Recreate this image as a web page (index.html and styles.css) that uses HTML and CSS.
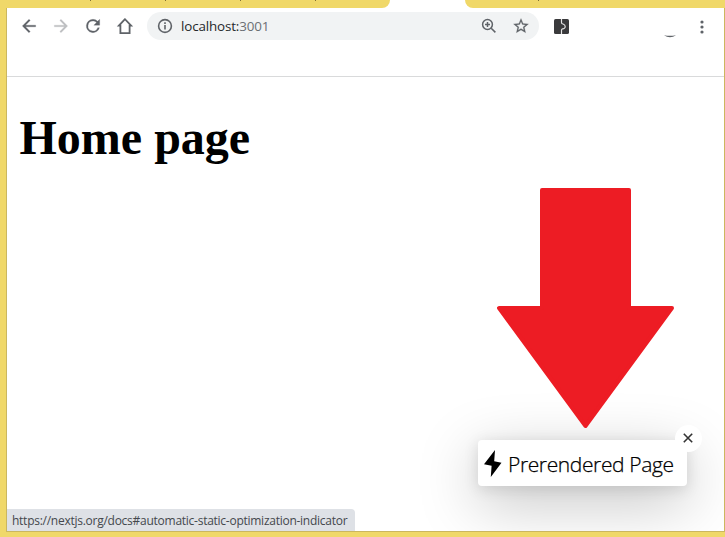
FILE: index.html
```
<!DOCTYPE html>
<html lang="en">
<head>
<meta charset="utf-8">
<title>Home page</title>
<link rel="stylesheet" href="styles.css">
</head>
<body>
<div class="tabs">
  <div class="tabs-left"><i class="sep s1"></i><i class="sep s2"></i><i class="sep s3"></i><i class="sep s4"></i></div>
  <div class="tabs-right"><i class="sep s5"></i></div>
</div>
<div class="window">
  <header class="toolbar">
    <nav class="nav">
      <svg class="icon" viewBox="0 0 24 24"><path d="M20 11H7.83l5.59-5.59L12 4l-8 8 8 8 1.41-1.41L7.83 13H20z"/></svg>
      <svg class="icon disabled" viewBox="0 0 24 24"><path d="M12 4l-1.41 1.41L16.17 11H4v2h12.17l-5.58 5.59L12 20l8-8z"/></svg>
      <svg class="icon" viewBox="0 0 24 24"><path d="M17.65 6.35A7.96 7.96 0 0 0 12 4a8 8 0 1 0 7.73 10h-2.08A6 6 0 1 1 12 6c1.66 0 3.14.69 4.22 1.78L13 11h7V4z"/></svg>
      <svg class="icon home" viewBox="0 0 20 20"><path d="M10 3.2L3.9 9.6H5.4V17.1H14.6V9.6H16.1Z"/></svg>
    </nav>
    <div class="address">
      <svg class="info" viewBox="0 0 16 16"><circle cx="8" cy="8" r="6.4"/><path d="M8 7v4.5M8 4.2v1.7"/></svg>
      <span class="url">localhost:<span class="port">3001</span></span>
      <svg class="zoom" viewBox="0 0 16 16"><circle cx="6.5" cy="6.5" r="4.9"/><path d="M10.2 10.2L14.4 14.4M4 6.5h5M6.5 4v5"/></svg>
      <svg class="star" viewBox="0 0 24 24"><path d="M22 9.24l-7.19-.62L12 2 9.19 8.63 2 9.24l5.46 4.73L5.82 21 12 17.27 18.18 21l-1.63-7.03zM12 15.4l-3.76 2.27 1-4.28-3.32-2.88 4.38-.38L12 6.1l1.71 4.04 4.38.38-3.32 2.88 1 4.28z"/></svg>
    </div>
    <svg class="extension" viewBox="0 0 14 14"><rect width="14" height="14" rx="1.5"/><path d="M7 0V3.2Q7 4.5 8.4 4.7Q10.5 5.4 10.5 7.2Q10.3 9 8 9.2Q7 9.4 7 10.6V14"/></svg>
    <svg class="avatar" viewBox="0 0 12 3"><path d="M0 .2Q6 1.4 12 .2Q6 4.2 0 .2Z"/></svg>
    <svg class="more" viewBox="0 0 4 14"><circle cx="2" cy="2" r="1.6"/><circle cx="2" cy="7" r="1.6"/><circle cx="2" cy="12" r="1.6"/></svg>
  </header>
  <main class="page">
    <h1>Home page</h1>
    <svg class="arrow" viewBox="0 0 178 241"><path d="M45 2H132V120H175L88.5 238L2 120H45Z"/></svg>
    <a class="indicator">
      <svg class="bolt" viewBox="0 0 18 27"><path d="M11 0L0 14.2L7.6 15.7L6.8 27L17.5 12.8L10.2 11.2Z"/></svg>
      <span class="label">Prerendered Page</span>
      <span class="close"><svg viewBox="0 0 10 10"><path d="M.8.8L9.2 9.2M9.2.8L.8 9.2"/></svg></span>
    </a>
    <div class="status"><span>https://nextjs.org/docs#automatic-static-optimization-indicator</span></div>
  </main>
</div>
</body>
</html>
```
FILE: styles.css
```
* { box-sizing: border-box; }
body { margin: 0; width: 725px; height: 537px; overflow: hidden; background: #f0d869; font-family: "Open Sans", sans-serif; }
svg { display: block; flex: none; }
.tabs { display: flex; justify-content: space-between; height: 8px; background: #fff; }
.tabs-left { position: relative; width: 390px; background: #f0d869; border-bottom-right-radius: 8px; }
.tabs-right { position: relative; width: 260px; background: #f0d869; border-bottom-left-radius: 8px; }
.sep { position: absolute; top: 0; width: 1px; height: 1px; background: #806f35; }
.s1 { left: 90px; }
.s2 { left: 165px; }
.s3 { left: 240px; }
.s4 { left: 315px; }
.s5 { left: 73px; }
.window { margin-left: 6px; height: 524px; display: flex; flex-direction: column; background: #fff; border: 1px solid #cbb75f; border-top: 0; }
.toolbar { display: flex; align-items: flex-start; height: 69px; flex: none; padding: 4px 0 0 12px; border-bottom: 1px solid #d9dadb; }
.nav { display: flex; gap: 12px; padding-top: 4px; }
.icon { width: 20px; height: 20px; fill: #5f6368; stroke: #5f6368; stroke-width: .3; }
.disabled { fill: #bdbfc1; stroke: #bdbfc1; }
.home { fill: none; stroke: #5f6368; stroke-width: 1.8; }
.address { display: flex; align-items: center; width: 392px; height: 28px; margin-left: 12px; padding: 0 9px 0 10px; border-radius: 14px; background: #f1f3f4; }
.info { width: 16px; height: 16px; fill: none; stroke: #5f6368; stroke-width: 1.6; }
.url { flex: 1; margin-left: 8px; font-size: 13.4px; line-height: 20px; letter-spacing: -0.14px; color: #25282b; }
.port { color: #6b6f73; }
.zoom { width: 16px; height: 16px; fill: none; stroke: #5f6368; stroke-width: 1.5; }
.star { width: 18px; height: 18px; margin-left: 15px; fill: #5f6368; stroke: #5f6368; stroke-width: .3; }
.extension { width: 15px; height: 15px; margin: 7px 0 0 14.5px; fill: #3a3a3c; }
.extension path { fill: none; stroke: #e5e5e5; stroke-width: 1.1; }
.avatar { width: 12px; height: 3px; margin: 23px 0 0 95.5px; fill: #5f6368; }
.more { width: 4px; height: 14px; margin: 7.5px 0 0 24px; fill: #5f6368; }
.page { position: relative; flex: 1; overflow: hidden; }
h1 { margin: 32px 0 0 12.5px; font: bold 48px/57px "Liberation Serif", serif; color: #000; white-space: nowrap; }
.arrow { position: absolute; z-index: 2; left: 490px; top: 111px; width: 178px; height: 241px; fill: #ed1c24; stroke: #ed1c24; stroke-width: 4; stroke-linejoin: round; }
.indicator { position: absolute; left: 471px; top: 363px; width: 209px; height: 46px; display: flex; align-items: center; padding-left: 6px; border-radius: 4px; background: #fff; box-shadow: 0 16px 60px rgba(0,0,0,.25), 0 3px 15px rgba(0,0,0,.12); }
.bolt { width: 18px; height: 27px; fill: #000; }
.label { margin: 2px 0 0 6px; font: 21px/30px "Open Sans", sans-serif; font-weight: 300; -webkit-text-stroke: .25px #000; letter-spacing: -0.38px; color: #000; white-space: nowrap; }
.close { position: absolute; right: -15px; top: -15px; width: 27px; height: 27px; padding: 0 1px 1px 0; display: grid; place-items: center; border-radius: 50%; background: #fff; }
.close svg { width: 10px; height: 10px; stroke: #333; stroke-width: 1.6; }
.status { position: absolute; left: 0; bottom: 0; width: 348px; height: 22px; padding-left: 5px; border-top-right-radius: 4px; background: #dee1e6; color: #44484d; font-size: 12px; line-height: 23px; letter-spacing: -0.26px; white-space: nowrap; }
```
